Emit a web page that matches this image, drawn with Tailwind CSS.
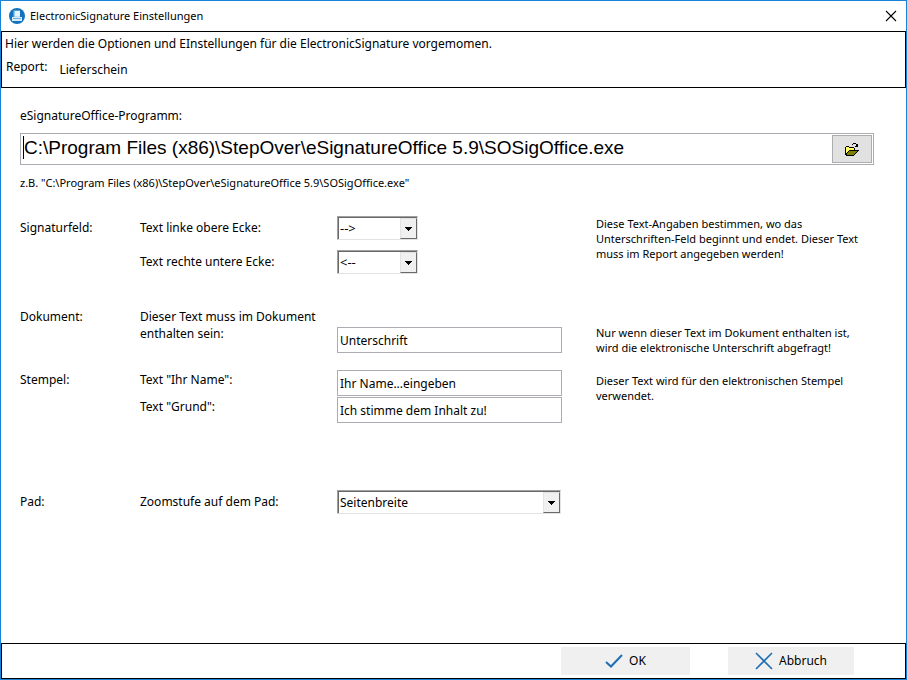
<!DOCTYPE html>
<html lang="de">
<head>
    <meta charset="UTF-8">
    <meta name="viewport" content="width=device-width, initial-scale=1.0">
    <title>ElectronicSignature Einstellungen</title>
    <script src="https://cdn.jsdelivr.net/npm/@tailwindcss/browser@4"></script>
</head>
<body class="bg-white text-black font-['Noto_Sans',sans-serif] text-[12px]">
    <div class="min-h-screen flex flex-col border border-[#1883d7]">

        <!-- Title bar -->
        <header class="h-[30px] shrink-0 flex items-center justify-between pl-2 pr-[9px]">
            <div class="flex items-center gap-[5px]">
                <svg class="size-4" viewBox="0 0 16 16">
                    <circle cx="8" cy="8" r="8" fill="#1272bb"/>
                    <path d="M4.500 2.500h6.500V9H4.500z" fill="#8fc6ec"/>
                    <path d="M6 3h5v5.500H6z" fill="#e6f5fd"/>
                    <path d="M3 9h10v4H3z" fill="#d3ebf9"/>
                    <path d="M4 10h8v1H4z" fill="#6fb2e0"/>
                </svg>
                <h1 class="text-[11px] leading-4">ElectronicSignature Einstellungen</h1>
            </div>
            <button type="button" aria-label="Schließen" class="p-0">
                <svg class="size-3" viewBox="0 0 12 12" fill="none" stroke="#000" stroke-width="1.1">
                    <path d="M1 1l10 10M11 1L1 11"/>
                </svg>
            </button>
        </header>

        <!-- Report info -->
        <section class="h-[57px] shrink-0 border border-black px-[3px] pt-[3px]">
            <p class="leading-[18px]">Hier werden die Optionen und EInstellungen für die ElectronicSignature vorgemomen.</p>
            <dl class="flex gap-3 pl-px pt-[5px] leading-[18px]">
                <dt>Report:</dt>
                <dd class="pt-[3px]">Lieferschein</dd>
            </dl>
        </section>

        <main class="grow pl-[19px] pr-8 pt-[19px]">
            <label for="program" class="block leading-[18px]">eSignatureOffice-Programm:</label>
            <div class="mt-2 h-8 flex border border-[#abadb3] p-px">
                <input id="program" type="text" value="C:\Program Files (x86)\StepOver\eSignatureOffice 5.9\SOSigOffice.exe"
                       class="grow min-w-0 ml-px my-px mb-1 border-l border-black font-['Liberation_Sans',sans-serif] text-[19px] leading-6 outline-none">
                <button type="button" aria-label="Datei öffnen"
                        class="w-10 flex items-center justify-center border border-[#adadad] bg-[#e1e1e1]">
                    <svg class="w-[14px] h-[13px]" viewBox="0 0 14 13" shape-rendering="crispEdges">
                        <path d="M1 4h3v1h5v3H4v3H1z" fill="#ffff60"/>
                        <path d="M4 8h9l-4 4H1z" fill="#808000"/>
                        <path d="M1 3h3v1H1zM0 4h1v8H0zM4 4h5v1H4zM9 5h1v2H9zM4 7h10v1H4zM3 8h1v1H3zM2 9h1v1H2zM1 10h1v2H1zM1 12h8v1H1zM12 8h1v1h-1zM11 9h1v1h-1zM10 10h1v1h-1zM9 11h1v1H9zM8 0h3v1H8zM7 1h1v1H7zM11 1h1v1h-1zM12 1h1v3h-3V3h1V2h1z"/>
                    </svg>
                </button>
            </div>
            <p class="mt-[10px] text-[11px] leading-[15px]">z.B. "C:\Program Files (x86)\StepOver\eSignatureOffice 5.9\SOSigOffice.exe"</p>

            <section class="mt-[26px] grid grid-cols-[120px_197px_225px_1fr]">
                <h2 class="leading-6">Signaturfeld:</h2>
                <div class="space-y-[10px] leading-6">
                    <label for="corner-start" class="block">Text linke obere Ecke:</label>
                    <label for="corner-end" class="block">Text rechte untere Ecke:</label>
                </div>
                <div class="space-y-[10px]">
                    <div class="w-[81px] h-6 border border-t-[#a0a0a0] border-l-[#a0a0a0] border-b-[#e3e3e3] border-r-[#e3e3e3]">
                        <div class="relative h-full border-t border-l border-[#696969]">
                            <select id="corner-start" class="w-full h-full appearance-none pl-px text-[13px] outline-none">
                                <option>--&gt;</option>
                            </select>
                            <span class="pointer-events-none absolute inset-y-0 right-0 w-[17px] flex items-center justify-center bg-[#f0f0f0] border border-t-[#e3e3e3] border-l-[#e3e3e3] border-b-[#696969] border-r-[#696969]">
                                <svg class="w-[7px] h-1" viewBox="0 0 7 4" shape-rendering="crispEdges"><path d="M0 0h7v1H0zM1 1h5v1H1zM2 2h3v1H2zM3 3h1v1H3z"/></svg>
                            </span>
                        </div>
                    </div>
                    <div class="w-[81px] h-6 border border-t-[#a0a0a0] border-l-[#a0a0a0] border-b-[#e3e3e3] border-r-[#e3e3e3]">
                        <div class="relative h-full border-t border-l border-[#696969]">
                            <select id="corner-end" class="w-full h-full appearance-none pl-px text-[13px] outline-none">
                                <option>&lt;--</option>
                            </select>
                            <span class="pointer-events-none absolute inset-y-0 right-0 w-[17px] flex items-center justify-center bg-[#f0f0f0] border border-t-[#e3e3e3] border-l-[#e3e3e3] border-b-[#696969] border-r-[#696969]">
                                <svg class="w-[7px] h-1" viewBox="0 0 7 4" shape-rendering="crispEdges"><path d="M0 0h7v1H0zM1 1h5v1H1zM2 2h3v1H2zM3 3h1v1H3z"/></svg>
                            </span>
                        </div>
                    </div>
                </div>
                <p class="pl-[34px] text-[11px] leading-[15px]">Diese Text-Angaben bestimmen, wo das<br>Unterschriften-Feld beginnt und endet. Dieser Text<br>muss im Report angegeben werden!</p>
            </section>

            <section class="mt-[34px] grid grid-cols-[120px_197px_225px_1fr]">
                <h2 class="leading-[17px]">Dokument:</h2>
                <label for="doc-text" class="leading-[17px]">Dieser Text muss im Dokument<br>enthalten sein:</label>
                <div class="pt-[19px]">
                    <input id="doc-text" type="text" value="Unterschrift" class="block w-full h-[26px] border border-[#abadb3] px-[2px] outline-none">
                </div>
                <p class="pl-[34px] pt-[17px] text-[11px] leading-[15px]">Nur wenn dieser Text im Dokument enthalten ist,<br>wird die elektronische Unterschrift abgefragt!</p>
            </section>

            <section class="mt-[15px] grid grid-cols-[120px_197px_225px_1fr]">
                <h2 class="leading-5">Stempel:</h2>
                <div class="space-y-[7px] leading-5">
                    <label for="stamp-name" class="block">Text "Ihr Name":</label>
                    <label for="stamp-reason" class="block">Text "Grund":</label>
                </div>
                <div class="space-y-px">
                    <input id="stamp-name" type="text" value="Ihr Name...eingeben" class="block w-full h-[26px] border border-[#abadb3] px-[2px] outline-none">
                    <input id="stamp-reason" type="text" value="Ich stimme dem Inhalt zu!" class="block w-full h-[26px] border border-[#abadb3] px-[2px] outline-none">
                </div>
                <p class="pl-[34px] pt-[3px] text-[11px] leading-[15px]">Dieser Text wird für den elektronischen Stempel<br>verwendet.</p>
            </section>

            <section class="mt-[67px] grid grid-cols-[120px_197px_225px_1fr]">
                <h2 class="leading-6">Pad:</h2>
                <label for="zoom" class="leading-6">Zoomstufe auf dem Pad:</label>
                <div class="h-6 mr-px border border-t-[#a0a0a0] border-l-[#a0a0a0] border-b-[#e3e3e3] border-r-[#e3e3e3]">
                    <div class="relative h-full border-t border-l border-[#696969]">
                        <select id="zoom" class="w-full h-full appearance-none pl-px outline-none">
                            <option>Seitenbreite</option>
                        </select>
                        <span class="pointer-events-none absolute inset-y-0 right-0 w-[17px] flex items-center justify-center bg-[#f0f0f0] border border-t-[#e3e3e3] border-l-[#e3e3e3] border-b-[#696969] border-r-[#696969]">
                            <svg class="w-[7px] h-1" viewBox="0 0 7 4" shape-rendering="crispEdges"><path d="M0 0h7v1H0zM1 1h5v1H1zM2 2h3v1H2zM3 3h1v1H3z"/></svg>
                        </span>
                    </div>
                </div>
            </section>
        </main>

        <footer class="h-9 shrink-0 flex justify-end gap-[38px] border border-black pt-[3px] pr-[51px]">
            <button type="button" class="w-[129px] h-7 flex items-center justify-center gap-[6px] bg-[#f0f0f0]">
                <svg class="w-[18px] h-[14px]" viewBox="0 0 18 14" fill="none" stroke="#1f6fb5" stroke-width="2">
                    <path d="M1 8l5 4.500L17 1"/>
                </svg>
                OK
            </button>
            <button type="button" class="w-[126px] h-7 flex items-center justify-center gap-[6px] bg-[#f0f0f0]">
                <svg class="w-[18px] h-[18px]" viewBox="0 0 18 18" fill="none" stroke="#1f6fb5" stroke-width="1.6">
                    <path d="M1 1l16 16M17 1L1 17"/>
                </svg>
                Abbruch
            </button>
        </footer>
    </div>
</body>
</html>
